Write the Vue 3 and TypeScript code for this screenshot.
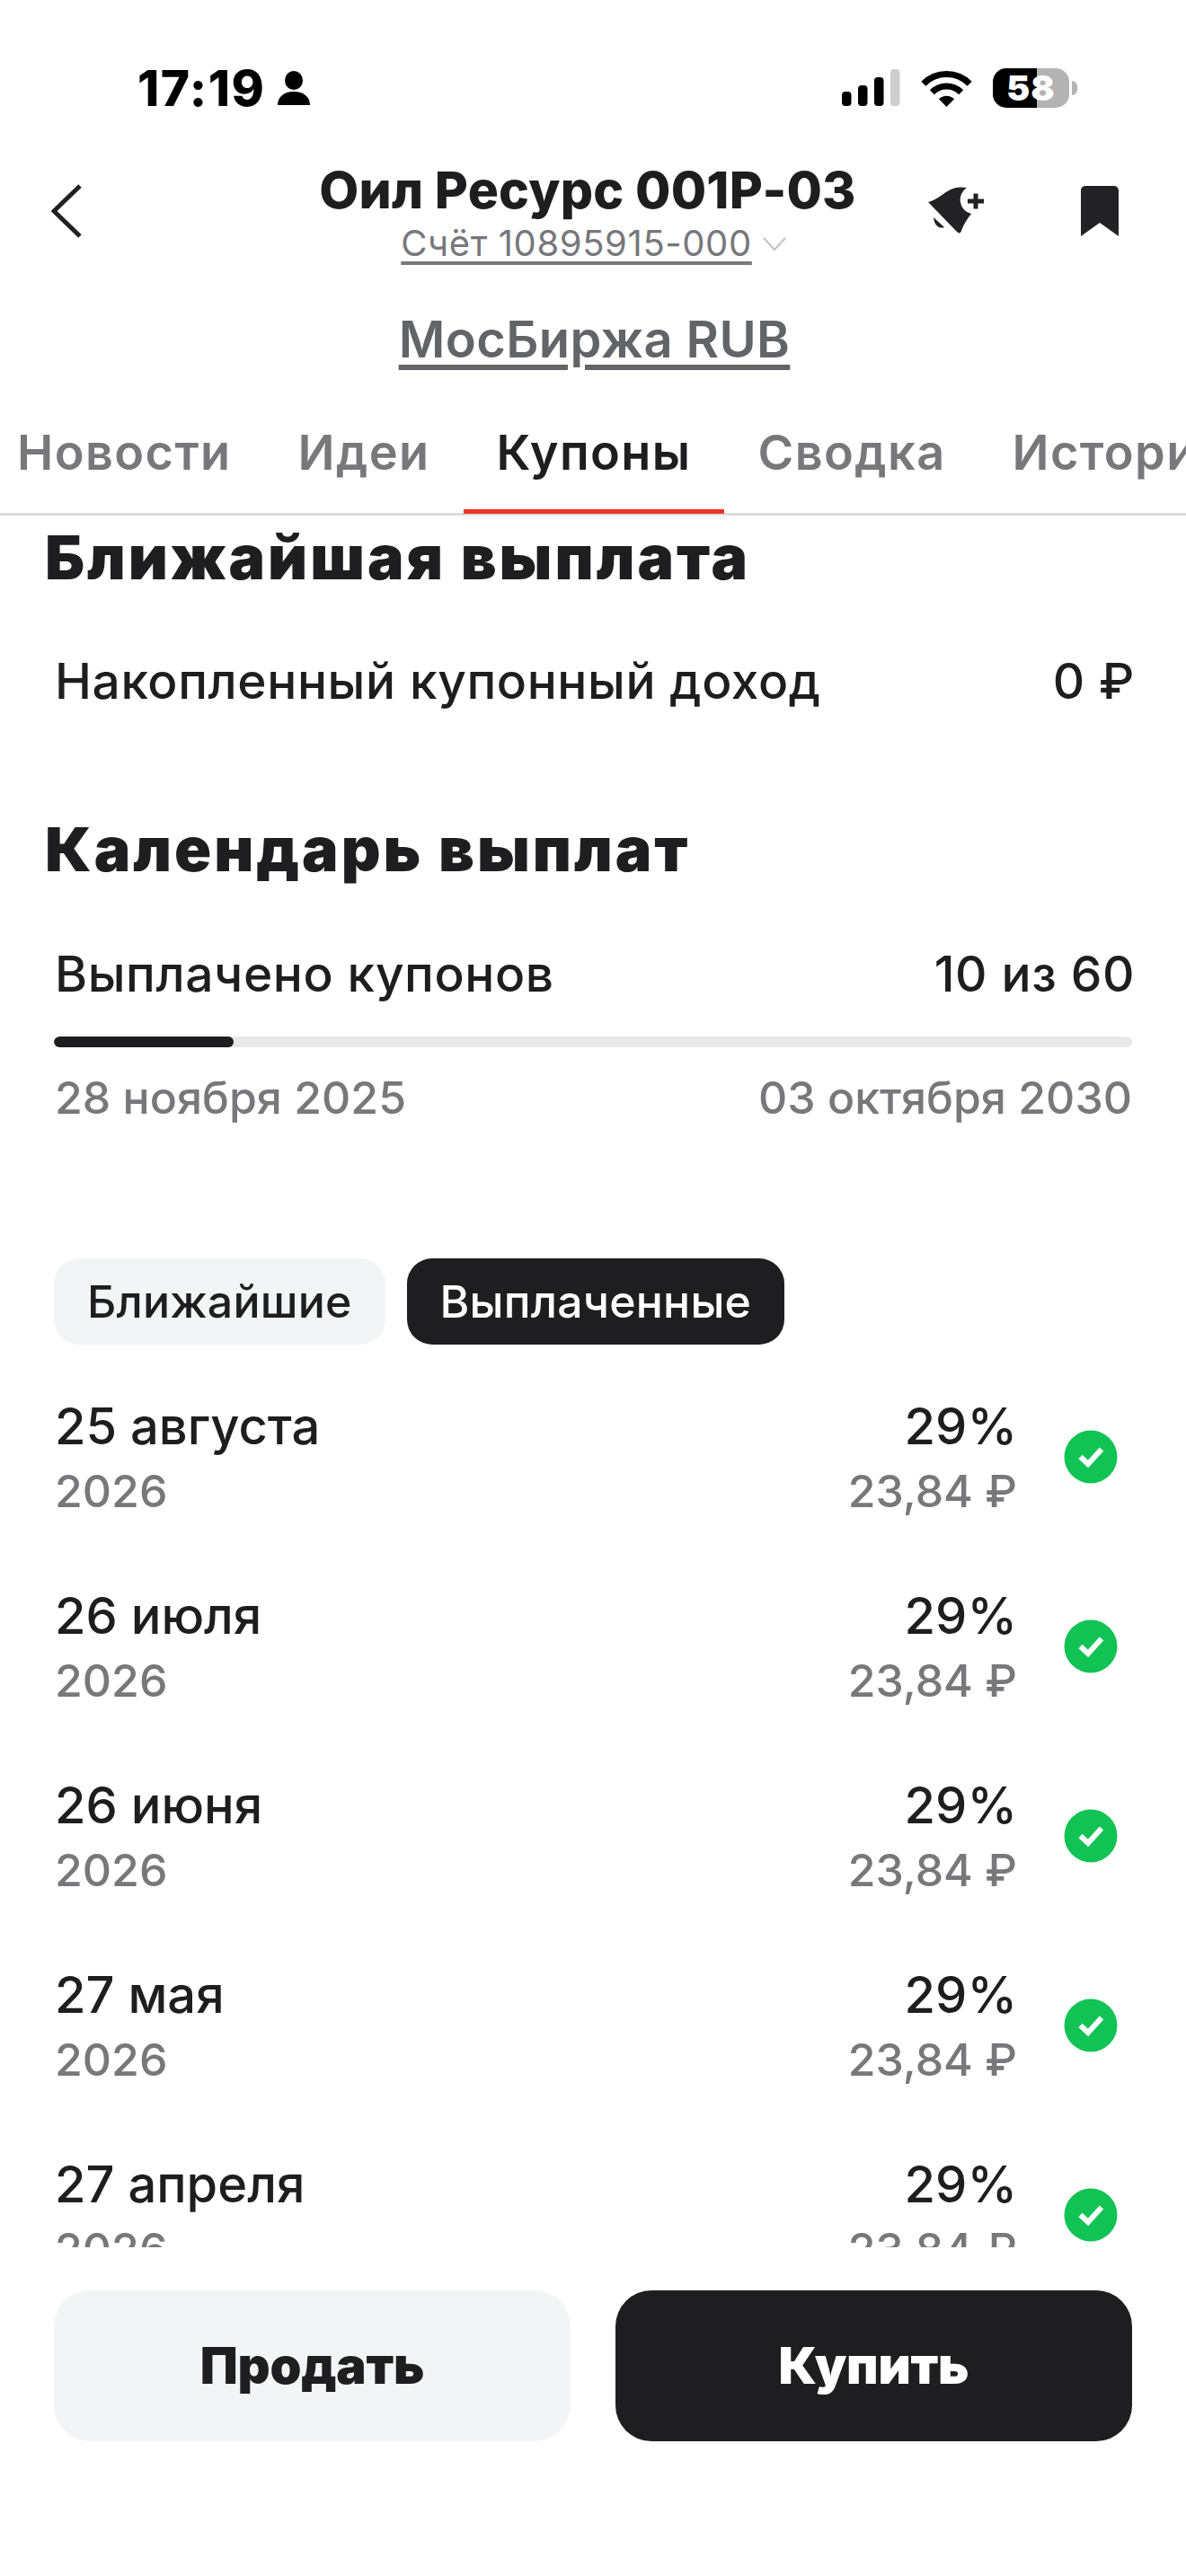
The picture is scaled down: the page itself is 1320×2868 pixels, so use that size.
<script setup lang="ts">
const tabs = ['Новости', 'Идеи', 'Купоны', 'Сводка', 'История']
const payments = [
  { date: '25 августа' },
  { date: '26 июля' },
  { date: '26 июня' },
  { date: '27 мая' },
  { date: '27 апреля' },
]
</script>

<template>
  <div class="page">
    <div class="status">
      <div class="clock">
        <span class="time">17:19</span>
        <svg width="36" height="38" viewBox="0 0 36 38"><ellipse cx="18" cy="10.5" rx="10" ry="10.5" fill="#000" /><path d="M0 38c0-9 7-15 18-15s18 6 18 15z" fill="#000" /></svg>
      </div>
      <div class="sys">
        <svg width="65" height="41" viewBox="0 0 65 41">
          <rect x="0" y="25" width="10.5" height="16" rx="4" fill="#000" />
          <rect x="18" y="18" width="10.5" height="23" rx="4" fill="#000" />
          <rect x="36" y="9" width="10.5" height="32" rx="4" fill="#000" />
          <rect x="54" y="0" width="10.5" height="41" rx="4" fill="#cdcdcd" />
        </svg>
        <svg width="57" height="42" viewBox="0 0 60 44">
          <path d="M3 17A38 38 0 0 1 57 17" fill="none" stroke="#000" stroke-width="7.5" />
          <path d="M13 27A24 24 0 0 1 47 27" fill="none" stroke="#000" stroke-width="7.5" />
          <path d="M30 44L21 35A12.7 12.7 0 0 1 39 35Z" fill="#000" />
        </svg>
        <div class="battery"><span>58</span><i class="tip"></i></div>
      </div>
    </div>

    <header class="head">
      <div class="head-left">
        <svg width="36" height="60" viewBox="0 0 36 60"><path d="M32 2L3 30L32 58" fill="none" stroke="#222226" stroke-width="5" /></svg>
      </div>
      <div class="head-mid">
        <div class="title">Оил Ресурс 001Р-03</div>
        <div class="account">
          <span class="acc-text">Счёт 10895915-000</span>
          <svg width="26" height="15" viewBox="0 0 26 15"><path d="M1 1L13 14L25 1" fill="none" stroke="#c2c2c4" stroke-width="2" /></svg>
        </div>
      </div>
      <div class="head-right">
        <svg width="90" height="80" viewBox="0 0 90 80">
          <path d="M13 30C22 28 30 20 38 16C44 13 50 13 56 14A16 16 0 0 0 61 43C56 49 52 56 50 62C49 65 47 65 45 63Z" fill="#222226" />
          <path d="M19 47L31 58C26 60 20 57 19 47Z" fill="#222226" />
          <path d="M57 26.500H63.500V20.500H68.500V26.500H75V31.500H68.500V37.500H63.500V31.500H57Z" fill="#222226" />
        </svg>
        <svg width="42" height="56" viewBox="0 0 42 56"><path d="M0 5a5 5 0 0 1 5-5h32a5 5 0 0 1 5 5V56L21 41L0 56Z" fill="#222226" /></svg>
      </div>
    </header>

    <div class="exchange"><span>МосБиржа RUB</span></div>

    <nav class="tabs">
      <div v-for="t in tabs" :key="t" class="tab" :class="{ active: t === 'Купоны' }">{{ t }}</div>
    </nav>

    <main class="scroll">
      <h2 class="h1">Ближайшая выплата</h2>
      <div class="line accrued"><span>Накопленный купонный доход</span><span>0 ₽</span></div>

      <h2 class="h1 second">Календарь выплат</h2>
      <div class="line paid"><span>Выплачено купонов</span><span>10 из 60</span></div>
      <div class="track"><div class="fill"></div></div>
      <div class="range"><span>28 ноября 2025</span><span>03 октября 2030</span></div>

      <div class="segments">
        <div class="seg">Ближайшие</div>
        <div class="seg on">Выплаченные</div>
      </div>

      <div class="rows">
        <div v-for="p in payments" :key="p.date" class="row">
          <div class="cell">
            <div class="main">{{ p.date }}</div>
            <div class="sub">2026</div>
          </div>
          <div class="cell right">
            <div class="main">29%</div>
            <div class="sub">23,84 ₽</div>
          </div>
          <svg class="ok" width="60" height="60" viewBox="0 0 60 60">
            <circle cx="30" cy="30" r="29.500" fill="#11c354" />
            <path d="M18.500 30L27 38L42 21.500" fill="none" stroke="#fff" stroke-width="6" />
          </svg>
        </div>
      </div>
    </main>

    <footer class="actions">
      <button class="btn sell">Продать</button>
      <button class="btn buy">Купить</button>
    </footer>
  </div>
</template>

<style>
html, body { margin: 0; background: #fff; }
</style>

<style scoped>
.page {
  width: 1320px;
  height: 2868px;
  overflow: hidden;
  background: #fff;
  font-family: Inter, "Noto Sans", sans-serif;
  color: #1e1e20;
  display: flex;
  flex-direction: column;
}
.status {
  height: 125px;
  padding: 35px 130px 0 153px;
  display: flex;
  justify-content: space-between;
  align-items: center;
  flex: none;
}
.clock { display: flex; align-items: center; gap: 14px; }
.time { font-size: 55px; font-weight: 800; line-height: 60px; color: #000; letter-spacing: 1.5px; }
.sys { display: flex; align-items: center; gap: 23px; }
.battery {
  position: relative;
  width: 85px;
  height: 44px;
  border-radius: 15px;
  background: linear-gradient(90deg, #000 0 49px, #b3b3b3 49px);
  display: flex;
  align-items: center;
  justify-content: center;
  color: #fff;
  font-size: 39px;
  font-weight: 900;
  line-height: 44px;
  letter-spacing: 1px;
}
.tip {
  position: absolute;
  left: 88px;
  top: 14px;
  width: 6px;
  height: 16px;
  border-radius: 0 8px 8px 0;
  background: #b3b3b3;
}
.head { display: flex; flex: none; height: 188px; }
.head-left { width: 57px; padding-top: 45px; padding-left: 57px; flex: none; }
.head-mid { width: 732px; margin-left: 174px; display: flex; flex-direction: column; align-items: center; flex: none; padding-top: 17px; }
.title { font-size: 57px; font-weight: 800; letter-spacing: 0.2px; line-height: 70px; white-space: nowrap; }
.account { display: flex; align-items: center; gap: 12px; height: 48px; padding-left: 13px; }
.acc-text {
  font-size: 40px;
  line-height: 48px;
  letter-spacing: 0.6px;
  color: #77777c;
  text-decoration: underline;
  text-decoration-thickness: 4px;
  text-underline-offset: 6px;
  white-space: nowrap;
}
.head-right { display: flex; align-items: flex-start; padding-top: 35px; gap: 93px; flex: none; }
.head-right svg:last-child { margin-top: 12px; }
.exchange { flex: none; text-align: center; height: 60px; line-height: 60px; padding-left: 3px; font-size: 56px; font-weight: 600; letter-spacing: 0.4px; color: #636469; }
.exchange span { text-decoration: underline; text-decoration-thickness: 6px; text-underline-offset: 8px; }
.tabs {
  flex: none;
  display: flex;
  height: 166px;
  box-sizing: border-box;
  padding-top: 64px;
  border-bottom: 3px solid #dcdcdc;
}
.tab {
  flex: none;
  height: 99px;
  padding: 0 37px;
  font-size: 54px;
  font-weight: 600;
  letter-spacing: 1.4px;
  line-height: 64px;
  color: #77777c;
  box-sizing: border-box;
  white-space: nowrap;
  position: relative;
}
.tab:first-child { margin-left: -18px; }
.tab.active { color: #1e1e20; }
.tab.active::after {
  content: '';
  position: absolute;
  left: 0;
  right: 0;
  bottom: -1px;
  height: 5px;
  background: #ee3524;
}
.scroll {
  flex: none;
  height: 1928px;
  overflow: hidden;
  padding: 6px 60px 0;
  box-sizing: border-box;
}
.h1 { margin: 0 0 0 -10px; font-size: 68px; font-weight: 900; letter-spacing: 3px; line-height: 80px; white-space: nowrap; }
.h1.second { margin-top: 115px; }
.line { display: flex; justify-content: space-between; font-size: 55px; font-weight: 500; letter-spacing: 0.6px; line-height: 64px; padding-left: 1px; margin-right: -3px; }
.accrued { margin-top: 66px; }
.paid { margin-top: 67px; }
.track { height: 12px; border-radius: 6px; background: #e8e8e8; margin-top: 38px; overflow: hidden; }
.fill { width: 200px; height: 100%; border-radius: 6px; background: #1e1e20; }
.range { display: flex; justify-content: space-between; margin-top: 26px; padding-left: 1px; font-size: 50px; font-weight: 500; line-height: 60px; color: #77777c; }
.segments { display: flex; gap: 24px; margin-top: 149px; }
.seg {
  height: 96px;
  line-height: 96px;
  padding: 0 37px;
  border-radius: 28px;
  background: #f2f4f6;
  font-size: 50px;
  font-weight: 500;
  letter-spacing: 0.2px;
  white-space: nowrap;
}
.seg.on { background: #1e1e20; color: #fff; }
.rows { margin-top: 55px; display: flex; flex-direction: column; gap: 66px; }
.row { display: flex; align-items: center; height: 145px; padding-left: 1px; }
.cell { flex: 1; }
.cell.right { text-align: right; }
.main { font-size: 56px; font-weight: 500; line-height: 72px; }
.sub { font-size: 50px; font-weight: 500; line-height: 73px; color: #77777c; }
.ok { flex: none; margin: -6px 16px 0 52px; }
.actions { flex: none; display: flex; gap: 50px; padding: 48px 60px 0; }
.btn {
  flex: 1;
  height: 168px;
  border: 0;
  border-radius: 40px;
  font-family: inherit;
  font-size: 56px;
  font-weight: 900;
  letter-spacing: -0.2px;
  padding: 0;
}
.sell { background: #f2f4f6; color: #1e1e20; }
.buy { background: #1e1e20; color: #fff; }
</style>
